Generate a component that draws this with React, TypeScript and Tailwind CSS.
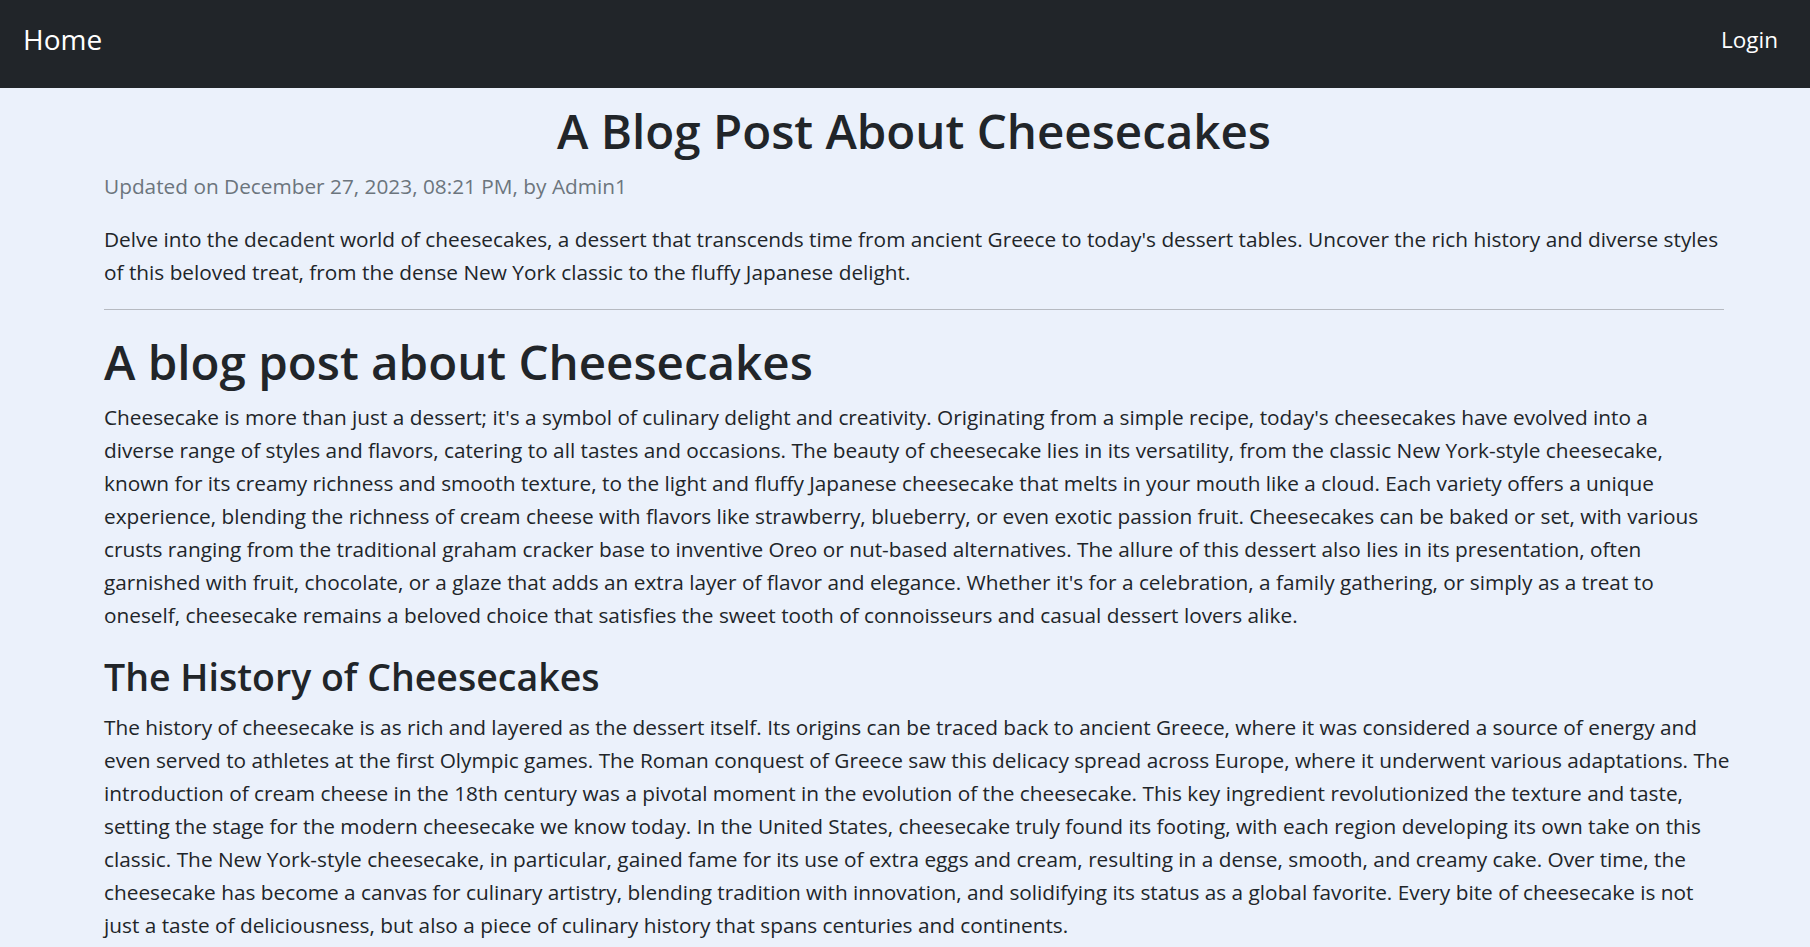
const font = { fontFamily: '"Open Sans", "Noto Sans", sans-serif' }

// line breaks kept as in the original page
const intro = [
  "Cheesecake is more than just a dessert; it's a symbol of culinary delight and creativity. Originating from a simple recipe, today's cheesecakes have evolved into a",
  'diverse range of styles and flavors, catering to all tastes and occasions. The beauty of cheesecake lies in its versatility, from the classic New York-style cheesecake,',
  'known for its creamy richness and smooth texture, to the light and fluffy Japanese cheesecake that melts in your mouth like a cloud. Each variety offers a unique',
  'experience, blending the richness of cream cheese with flavors like strawberry, blueberry, or even exotic passion fruit. Cheesecakes can be baked or set, with various',
  'crusts ranging from the traditional graham cracker base to inventive Oreo or nut-based alternatives. The allure of this dessert also lies in its presentation, often',
  "garnished with fruit, chocolate, or a glaze that adds an extra layer of flavor and elegance. Whether it's for a celebration, a family gathering, or simply as a treat to",
  'oneself, cheesecake remains a beloved choice that satisfies the sweet tooth of connoisseurs and casual dessert lovers alike.',
]

const sections = [
  {
    heading: 'The History of Cheesecakes',
    lines: [
      'The history of cheesecake is as rich and layered as the dessert itself. Its origins can be traced back to ancient Greece, where it was considered a source of energy and',
      'even served to athletes at the first Olympic games. The Roman conquest of Greece saw this delicacy spread across Europe, where it underwent various adaptations. The',
      'introduction of cream cheese in the 18th century was a pivotal moment in the evolution of the cheesecake. This key ingredient revolutionized the texture and taste,',
      'setting the stage for the modern cheesecake we know today. In the United States, cheesecake truly found its footing, with each region developing its own take on this',
      'classic. The New York-style cheesecake, in particular, gained fame for its use of extra eggs and cream, resulting in a dense, smooth, and creamy cake. Over time, the',
      'cheesecake has become a canvas for culinary artistry, blending tradition with innovation, and solidifying its status as a global favorite. Every bite of cheesecake is not',
      'just a taste of deliciousness, but also a piece of culinary history that spans centuries and continents.',
    ],
  },
]

function Lines({ lines }: { lines: string[] }) {
  return (
    <p className="text-[20.8px] leading-[33px]">
      {lines.map((l, i) => (
        <span key={i} className="block whitespace-nowrap">
          {l}
        </span>
      ))}
    </p>
  )
}

function Navbar() {
  return (
    <nav className="h-[88px] bg-[#212529] flex items-center justify-between pl-[23px] pr-[32px] pb-[10px]">
      <a className="text-[28px] text-white leading-none">Home</a>
      <a className="mt-[3px] text-[22.5px] text-white leading-none">Login</a>
    </nav>
  )
}

export default function App() {
  return (
    <div className="min-h-screen bg-[#ebf1fb] text-[#212529]" style={font}>
      <Navbar />
      <main className="ml-[104px] w-[1620px] pt-[14px] pb-10">
        <h1 className="text-center text-[47.5px] leading-[58px] font-semibold">A Blog Post About Cheesecakes</h1>
        <p className="mt-[10px] text-[20.8px] leading-[33px] text-[#6c757d]">
          Updated on December 27, 2023, 08:21 PM, by Admin1
        </p>
        <p className="mt-[20px] text-[20.8px] leading-[33px]">
          Delve into the decadent world of cheesecakes, a dessert that transcends time from ancient Greece to today's dessert tables. Uncover the rich history and diverse styles of this beloved treat, from the dense New York classic to the fluffy Japanese delight.
        </p>
        <hr className="mt-[20px] border-0 border-t border-[#b6bac1]" />

        {/* Article body */}
        <article>
          <h1 className="mt-[23px] mb-[10px] text-[47.5px] leading-[58px] font-semibold">A blog post about Cheesecakes</h1>
          <Lines lines={intro} />
          {sections.map((s) => (
            <section key={s.heading}>
              <h2 className="mt-[22px] mb-[11px] text-[37.5px] leading-[46px] font-semibold">{s.heading}</h2>
              <Lines lines={s.lines} />
            </section>
          ))}
        </article>
      </main>
    </div>
  )
}
